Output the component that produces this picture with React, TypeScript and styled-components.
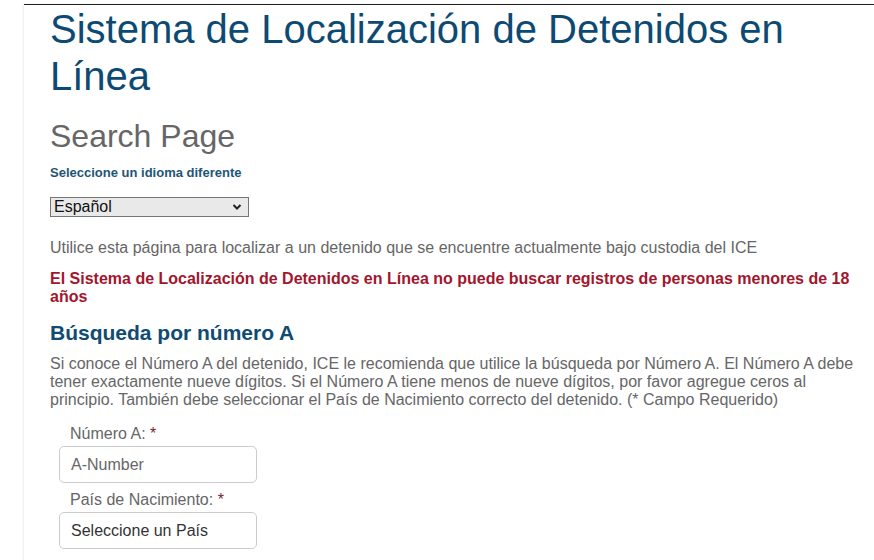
import React from 'react';
import styled, { createGlobalStyle } from 'styled-components';

// Global page reset
const GlobalStyle = createGlobalStyle`
  html, body {
    margin: 0;
    padding: 0;
    background: #ffffff;
    font-family: "Liberation Sans", Arial, sans-serif;
  }
`;

const Page = styled.div`
  padding-top: 4px;
  padding-left: 24px;
  min-height: 560px;
  box-sizing: border-box;
`;

const Panel = styled.main`
  border-top: 1px solid #222;
  box-shadow: -1px 0 2px rgba(0, 0, 0, 0.08);
  padding: 1px 16px 20px 26px;
  min-height: 560px;
  box-sizing: border-box;
`;

const Title = styled.h1`
  margin: 0;
  font-size: 40px;
  line-height: 47px;
  font-weight: normal;
  color: #0d4a73;
`;

const SubTitle = styled.h2`
  margin: 18px 0 0;
  font-size: 32px;
  line-height: 36px;
  font-weight: normal;
  color: #666;
`;

const LangLabel = styled.label`
  display: block;
  margin-top: 11px;
  font-size: 13px;
  line-height: 16px;
  font-weight: bold;
  color: #1d5675;
`;

const SelectWrap = styled.div`
  position: relative;
  width: 199px;
  margin-top: 16px;
`;

const LangSelect = styled.select`
  appearance: none;
  display: block;
  width: 199px;
  height: 20px;
  margin: 0;
  padding: 0 0 0 3px;
  border: 1px solid #767676;
  border-radius: 0;
  background: #e9e9e9;
  color: #111;
  font-family: "Liberation Sans", Arial, sans-serif;
  font-size: 16px;
  line-height: 18px;
`;

const Chevron = styled.svg`
  position: absolute;
  right: 7px;
  top: 6px;
  pointer-events: none;
`;

const Text = styled.p<{ $gap?: number; $color?: string; $bold?: boolean }>`
  margin: ${(p) => p.$gap ?? 11}px 0 0;
  font-size: 16px;
  line-height: 18px;
  color: ${(p) => p.$color ?? '#666'};
  font-weight: ${(p) => (p.$bold ? 'bold' : 'normal')};
`;

const SectionHeading = styled.h3`
  margin: 15px 0 0;
  font-size: 21px;
  line-height: 24px;
  font-weight: bold;
  color: #0f4b73;
`;

const FormGroup = styled.div<{ $gap: number }>`
  margin: ${(p) => p.$gap}px 0 0 9px;
  display: flex;
  flex-direction: column;
  align-items: flex-start;
`;

const FieldLabel = styled.label`
  padding-left: 11px;
  font-size: 16px;
  line-height: 18px;
  color: #666;
`;

const Req = styled.span`
  color: #7a1f2b;
`;

const Field = styled.div<{ $filled?: boolean }>`
  margin-top: 3px;
  width: 198px;
  height: 37px;
  box-sizing: border-box;
  border: 1px solid #ccc;
  border-radius: 5px;
  padding: 0 11px;
  display: flex;
  align-items: center;
  font-size: 16px;
  color: ${(p) => (p.$filled ? '#333' : '#666')};
  background: #fff;
`;

export default function App() {
  return (
    <>
      <GlobalStyle />
      <Page>
        <Panel>
          <Title>Sistema de Localización de Detenidos en Línea</Title>
          <SubTitle>Search Page</SubTitle>
          <LangLabel htmlFor="lang">Seleccione un idioma diferente</LangLabel>
          <SelectWrap>
            <LangSelect id="lang" defaultValue="es">
              <option value="es">Español</option>
              <option value="en">English</option>
            </LangSelect>
            <Chevron width="10" height="8" viewBox="0 0 10 8">
              <path d="M1.5 2 L5 5.5 L8.5 2" fill="none" stroke="#222" strokeWidth="2" />
            </Chevron>
          </SelectWrap>
          <Text $gap={22}>
            Utilice esta página para localizar a un detenido que se encuentre actualmente bajo custodia del ICE
          </Text>
          <Text $gap={13} $color="#a3152d" $bold>
            El Sistema de Localización de Detenidos en Línea no puede buscar registros de personas menores de 18
            años
          </Text>
          <SectionHeading>Búsqueda por número A</SectionHeading>
          <Text $gap={10}>
            Si conoce el Número A del detenido, ICE le recomienda que utilice la búsqueda por Número A. El Número A debe
            tener exactamente nueve dígitos. Si el Número A tiene menos de nueve dígitos, por favor agregue ceros al
            principio. También debe seleccionar el País de Nacimiento correcto del detenido. (* Campo Requerido)
          </Text>
          <FormGroup $gap={16}>
            <FieldLabel>
              Número A: <Req>*</Req>
            </FieldLabel>
            <Field>A-Number</Field>
          </FormGroup>
          <FormGroup $gap={8}>
            <FieldLabel>
              País de Nacimiento: <Req>*</Req>
            </FieldLabel>
            <Field $filled>Seleccione un País</Field>
          </FormGroup>
        </Panel>
      </Page>
    </>
  );
}
